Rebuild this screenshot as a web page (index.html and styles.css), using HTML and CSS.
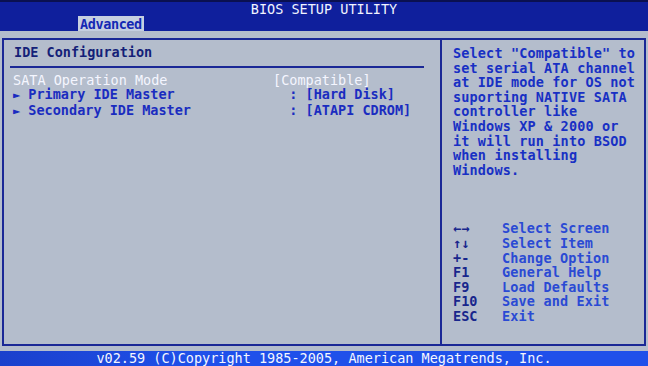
FILE: index.html
```html
<!DOCTYPE html>
<html>
<head>
    <title>BIOS Setup Utility</title>
    <link rel="stylesheet" href="styles.css">
</head>
<body>
    <div class="header">
        <div class="title">BIOS SETUP UTILITY</div>
        <div class="tabs">
            <span class="tab active">Advanced</span>
        </div>
    </div>

    <div class="main">
        <!-- Settings list -->
        <div class="settings">
            <div class="section-title">IDE Configuration</div>
            <div class="rule"></div>
            <div class="row selected">
                <span class="label">SATA Operation Mode</span><span class="value">[Compatible]</span>
            </div>
            <div class="row">
                <span class="label"><span class="arrow">►</span> Primary IDE Master</span><span class="value">  : [Hard Disk]</span>
            </div>
            <div class="row">
                <span class="label"><span class="arrow">►</span> Secondary IDE Master</span><span class="value">  : [ATAPI CDROM]</span>
            </div>
        </div>

        <!-- Help panel -->
        <div class="help">
            <div class="help-text">Select "Compatible" to
set serial ATA channel
at IDE mode for OS not
suporting NATIVE SATA
controller like
Windows XP &amp; 2000 or
it will run into BSOD
when installing
Windows.</div>
            <div class="keys">
                <div class="key-row"><span class="key">←→</span><span class="desc">Select Screen</span></div>
                <div class="key-row"><span class="key">↑↓</span><span class="desc">Select Item</span></div>
                <div class="key-row"><span class="key">+-</span><span class="desc">Change Option</span></div>
                <div class="key-row"><span class="key">F1</span><span class="desc">General Help</span></div>
                <div class="key-row"><span class="key">F9</span><span class="desc">Load Defaults</span></div>
                <div class="key-row"><span class="key">F10</span><span class="desc">Save and Exit</span></div>
                <div class="key-row"><span class="key">ESC</span><span class="desc">Exit</span></div>
            </div>
        </div>
    </div>

    <div class="footer">v02.59 (C)Copyright 1985-2005, American Megatrends, Inc.</div>
</body>
</html>
```

FILE: styles.css
```css
body {
    margin: 0;
    width: 648px;
    height: 366px;
    overflow: hidden;
    background-color: #b4bdcc;
    font-family: "DejaVu Sans Mono", "Liberation Mono", monospace;
    font-size: 13.5px;
    font-weight: bold;
    line-height: 14.6px;
    color: #1a2cc0;
}
.header {
    height: 31px;
    background-color: #0f1f9c;
    border-top: 2px solid #0a1050;
    box-sizing: border-box;
}
.title {
    text-align: center;
    color: #f2f4ff;
    font-weight: normal;
    height: 14px;
    line-height: 14px;
}
.tabs {
    padding-left: 78px;
    height: 15px;
}
.tab {
    display: inline-block;
    height: 15px;
    line-height: 16px;
    padding: 0 2px 0 2px;
    letter-spacing: -0.4px;
}
.tab.active {
    background-color: #c6cfe0;
    color: #1428b4;
}
.main {
    display: flex;
    margin: 7px 2px 0 2px;
    height: 308px;
    border: 2px solid #1a2896;
    box-sizing: border-box;
}
.settings {
    width: 438px;
    padding: 5px 16px 0 6px;
    box-sizing: border-box;
    border-right: 2px solid #1a2896;
}
.section-title {
    padding-left: 4px;
    color: #141f78;
}
.rule {
    height: 2px;
    margin: 6px 0 5px 0;
    background-color: #1a2896;
}
.row {
    display: flex;
    padding-left: 3px;
    white-space: pre;
}
.label {
    width: 260px;
}
.selected {
    color: #f4f6ff;
    font-weight: normal;
}
.arrow {
    font-size: 12px;
}
.help {
    flex: 1;
    padding: 6px 0 0 11px;
}
.help-text {
    white-space: pre;
    color: #1830c4;
    letter-spacing: 0.15px;
}
.keys {
    margin-top: 44px;
}
.key-row {
    display: flex;
}
.key {
    width: 49px;
    color: #18268c;
}
.desc {
    color: #2a4ad4;
    letter-spacing: 0.15px;
}
.footer {
    margin-top: 5px;
    height: 15px;
    line-height: 15px;
    background: linear-gradient(to right, #1a40cc, #1f50ea 30%, #1f50ea);
    color: #f4f6ff;
    text-align: center;
    font-weight: normal;
}
```
